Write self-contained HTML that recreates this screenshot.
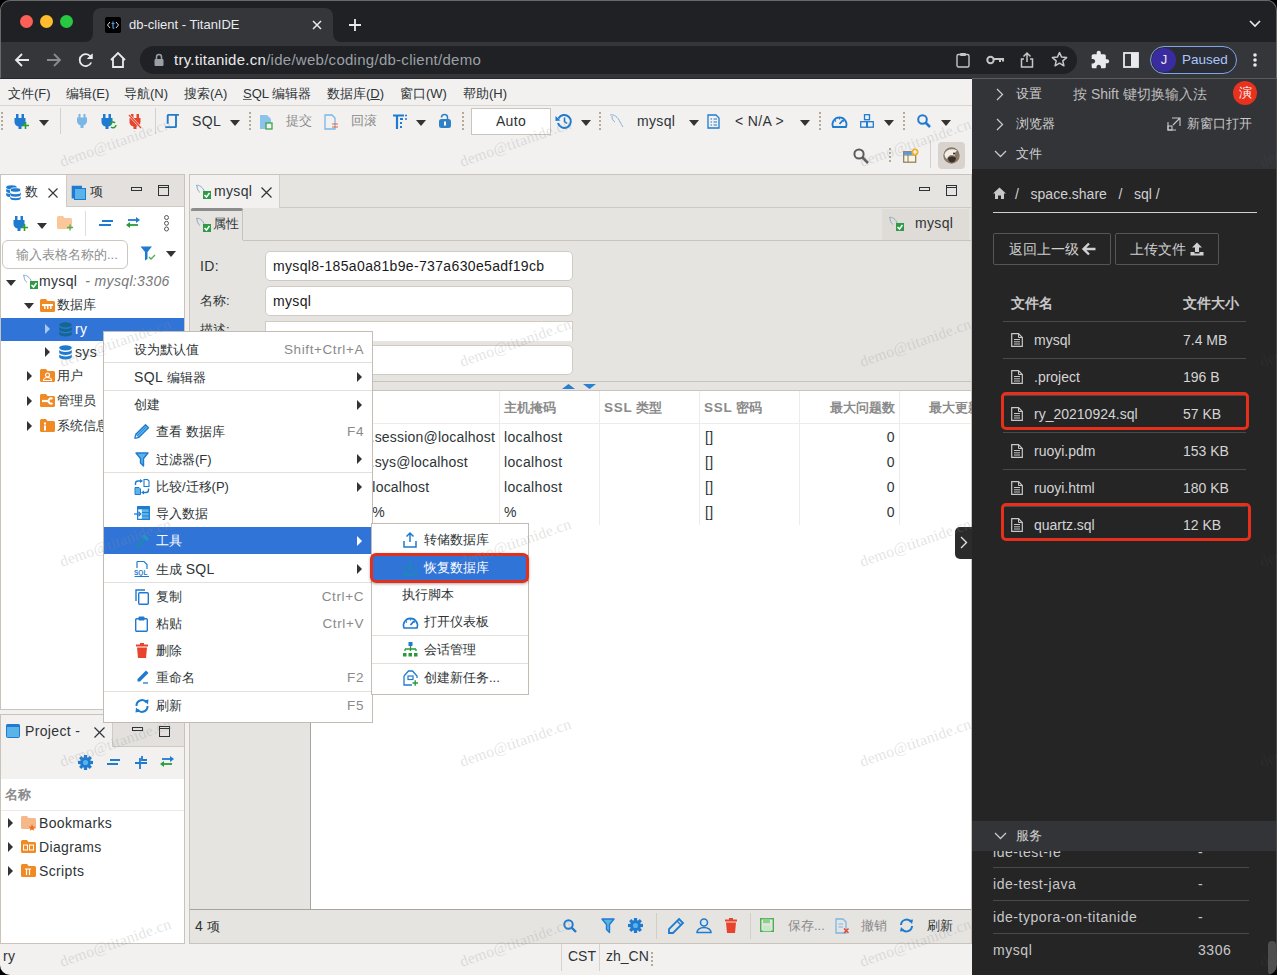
<!DOCTYPE html>
<html><head><meta charset="utf-8">
<style>
*{box-sizing:border-box;margin:0;padding:0}
html,body{width:1277px;height:975px;overflow:hidden;background:#f2f1f0;font-family:"Liberation Sans",sans-serif;}
.a{position:absolute}
.t{position:absolute;white-space:nowrap;line-height:16px}
svg{position:absolute;overflow:visible}
.l{font-size:14px;letter-spacing:0.35px}
.c{font-size:13px}
.g{color:#2e3436}
</style></head><body>

<!-- ============ BROWSER CHROME ============ -->
<div class="a" style="left:0;top:0;width:1277px;height:42px;background:#202124"></div>
<!-- traffic lights -->
<div class="a" style="left:20px;top:15px;width:13px;height:13px;border-radius:50%;background:#fe5f57"></div>
<div class="a" style="left:40px;top:15px;width:13px;height:13px;border-radius:50%;background:#febc2e"></div>
<div class="a" style="left:60px;top:15px;width:13px;height:13px;border-radius:50%;background:#28c840"></div>
<!-- active tab -->
<div class="a" style="left:93px;top:8px;width:240px;height:36px;background:#35363a;border-radius:8px 8px 0 0"></div>
<div class="a" style="left:85px;top:34px;width:8px;height:8px;background:#35363a"></div>
<div class="a" style="left:85px;top:34px;width:8px;height:8px;background:#202124;border-radius:0 0 8px 0"></div>
<div class="a" style="left:333px;top:34px;width:8px;height:8px;background:#35363a"></div>
<div class="a" style="left:333px;top:34px;width:8px;height:8px;background:#202124;border-radius:0 0 0 8px"></div>
<!-- toolbar -->
<div class="a" style="left:0;top:42px;width:1277px;height:37px;background:#35363a"></div>


<!-- favicon -->
<div class="a" style="left:105px;top:17px;width:16px;height:16px;background:#000;border-radius:2px"></div>
<svg style="left:105px;top:17px" width="16" height="16"><path d="M5 5L2.5 8L5 11M11 5L13.5 8L11 11" stroke="#d8d8d8" stroke-width="1" fill="none"/><path d="M8 4.5V10.5Q8 11.5 9.3 11.2M6.5 6.5H9.5" stroke="#4a9fe0" stroke-width="1.2" fill="none"/></svg>
<div class="t" style="left:129px;top:16px;font-size:13px;line-height:18px;color:#e8eaed">db-client - TitanIDE</div>
<!-- tab close -->
<svg style="left:311px;top:19px" width="12" height="12"><path d="M2 2L10 10M10 2L2 10" stroke="#e8eaed" stroke-width="1.5"/></svg>
<!-- new tab plus -->
<svg style="left:348px;top:18px" width="14" height="14"><path d="M7 1V13M1 7H13" stroke="#e8eaed" stroke-width="1.8"/></svg>
<!-- chevron top right -->
<svg style="left:1249px;top:20px" width="12" height="8"><path d="M1 1L6 6L11 1" stroke="#e8eaed" stroke-width="1.6" fill="none"/></svg>
<!-- nav icons -->
<svg style="left:14px;top:52px" width="16" height="16"><path d="M15 8H2M8 2L2 8L8 14" stroke="#e8eaed" stroke-width="1.8" fill="none"/></svg>
<svg style="left:46px;top:52px" width="16" height="16"><path d="M1 8H14M8 2L14 8L8 14" stroke="#8b8c8f" stroke-width="1.8" fill="none"/></svg>
<svg style="left:78px;top:52px" width="16" height="16"><path d="M13.5 6.5A6 6 0 1 0 13.2 10.5" stroke="#e8eaed" stroke-width="1.8" fill="none"/><path d="M14.5 1.5V7H9" fill="#e8eaed"/><path d="M14.5 1.5L14.5 7L9 7Z" fill="#e8eaed"/></svg>
<svg style="left:109px;top:51px" width="18" height="18"><path d="M2 9L9 2L16 9M4 7.5V16H14V7.5" stroke="#e8eaed" stroke-width="1.8" fill="none" stroke-linejoin="miter"/></svg>
<!-- omnibox -->
<div class="a" style="left:140px;top:46px;width:937px;height:28px;border-radius:14px;background:#202124"></div>
<svg style="left:154px;top:53px" width="10" height="13"><path d="M2.5 6V4A2.5 2.5 0 0 1 7.5 4V6" stroke="#9aa0a6" stroke-width="1.5" fill="none"/><rect x="0.5" y="6" width="9" height="7" rx="1" fill="#9aa0a6"/></svg>
<div class="t" style="left:174px;top:51px;font-size:15px;letter-spacing:0.27px;line-height:18px;color:#e8eaed">try.titanide.cn<span style="color:#9aa0a6">/ide/web/coding/db-client/demo</span></div>
<!-- omnibox right icons -->
<svg style="left:956px;top:52px" width="14" height="16"><rect x="1" y="2.5" width="12" height="12.5" rx="1.5" stroke="#c4c7c5" stroke-width="1.4" fill="none"/><rect x="4" y="1" width="6" height="3" rx="1" fill="#c4c7c5"/></svg>
<svg style="left:986px;top:55px" width="18" height="10"><circle cx="4.5" cy="5" r="3.2" stroke="#c4c7c5" stroke-width="2" fill="none"/><path d="M7.5 4H17V6.5M14 4V7" stroke="#c4c7c5" stroke-width="2" fill="none"/></svg>
<svg style="left:1020px;top:51px" width="14" height="17"><path d="M7 11V2M3.5 5.5L7 2L10.5 5.5M4 8H1.5V16H12.5V8H10" stroke="#c4c7c5" stroke-width="1.5" fill="none"/></svg>
<svg style="left:1051px;top:51px" width="17" height="17"><path d="M8.5 1.5L10.6 6.1L15.6 6.6L11.8 9.9L12.9 14.8L8.5 12.2L4.1 14.8L5.2 9.9L1.4 6.6L6.4 6.1Z" stroke="#c4c7c5" stroke-width="1.5" fill="none" stroke-linejoin="round"/></svg>
<!-- extension puzzle -->
<svg style="left:1090px;top:50px" width="20" height="20" viewBox="0 0 24 24"><path d="M20.5 11H19V7c0-1.1-.9-2-2-2h-4V3.5C13 2.12 11.88 1 10.5 1S8 2.12 8 3.5V5H4c-1.1 0-1.99.9-1.99 2v3.8H3.5c1.49 0 2.7 1.21 2.7 2.7s-1.21 2.7-2.7 2.7H2V20c0 1.1.9 2 2 2h3.8v-1.5c0-1.49 1.210-2.7 2.7-2.7 1.49 0 2.7 1.21 2.7 2.7V22H17c1.1 0 2-.9 2-2v-4h1.5c1.38 0 2.5-1.120 2.5-2.5S21.88 11 20.5 11z" fill="#e8eaed"/></svg>
<!-- sidebar -->
<svg style="left:1123px;top:52px" width="16" height="16"><rect x="1" y="1" width="14" height="14" stroke="#e8eaed" stroke-width="1.8" fill="none"/><rect x="8" y="1" width="7" height="14" fill="#e8eaed"/></svg>
<!-- paused pill -->
<div class="a" style="left:1150px;top:46px;width:87px;height:28px;border-radius:14px;border:1.5px solid #7ea6e6;background:#2b2d35"></div>
<div class="a" style="left:1152px;top:48px;width:24px;height:24px;border-radius:50%;background:#3b2ba0"></div>
<div class="t" style="left:1152px;top:52px;width:24px;text-align:center;font-size:13px;color:#e8eaed">J</div>
<div class="t" style="left:1182px;top:51px;font-size:13.5px;line-height:18px;color:#a8c7fa">Paused</div>
<!-- menu dots -->
<svg style="left:1252px;top:52px" width="6" height="16"><circle cx="3" cy="3" r="1.8" fill="#e8eaed"/><circle cx="3" cy="8" r="1.8" fill="#e8eaed"/><circle cx="3" cy="13" r="1.8" fill="#e8eaed"/></svg>

<!-- ============ IDE ============ -->
<div class="a" style="left:0;top:79px;width:972px;height:896px;background:#f2f1f0"></div>


<!-- menu bar -->
<div class="t" style="left:8px;top:86px;font-size:13px;color:#2e3436">文件(F)</div>
<div class="t" style="left:66px;top:86px;font-size:13px;color:#2e3436">编辑(E)</div>
<div class="t" style="left:124px;top:86px;font-size:13px;color:#2e3436">导航(N)</div>
<div class="t" style="left:184px;top:86px;font-size:13px;color:#2e3436">搜索(A)</div>
<div class="t" style="left:243px;top:86px;font-size:13px;color:#2e3436"><u style="text-decoration-color:#666">S</u>QL 编辑器</div>
<div class="t" style="left:327px;top:86px;font-size:13px;color:#2e3436">数据库(<u>D</u>)</div>
<div class="t" style="left:400px;top:86px;font-size:13px;color:#2e3436">窗口(W)</div>
<div class="t" style="left:463px;top:86px;font-size:13px;color:#2e3436">帮助(H)</div>
<div class="a" style="left:0;top:105px;width:972px;height:1px;background:#d9d5d0"></div>
<!-- toolbar 1 -->
<div class="a" style="left:1px;top:112px;width:2px;height:19px;background:repeating-linear-gradient(#b5a998 0 2px,transparent 2px 4px)"></div>
<svg style="left:14px;top:113px" width="16" height="17"><path d="M2 1H4.5V5H7.5V1H10V5H11.5V9A5 5 0 0 1 7.5 13.5V16H4.5V13.5A5 5 0 0 1 0.5 9V5H2Z" fill="#1e7bd0"/><path d="M8 12.5H15M11.5 9V16" stroke="#2aa02a" stroke-width="1.6"/></svg>
<svg style="left:39px;top:120px" width="10" height="6"><path d="M0 0H10L5.0 6Z" fill="#333"/></svg>
<div class="a" style="left:60px;top:108px;width:1px;height:26px;background:#d5d0ca"></div>
<svg style="left:77px;top:114px" width="10" height="14"><path d="M1.5 0H3.5V3.5H6.5V0H8.5V3.5H10V7A5 5 0 0 1 6.5 11.5V14H3.5V11.5A5 5 0 0 1 0 7V3.5H1.5Z" fill="#7ab6e6"/></svg>
<svg style="left:101px;top:113px" width="16" height="17"><path d="M2 1H4.5V5H7.5V1H10V5H11.5V9A5 5 0 0 1 7.5 13.5V16H4.5V13.5A5 5 0 0 1 0.5 9V5H2Z" fill="#1e7bd0"/><path d="M9 11A3 3 0 0 1 14 10M15 12A3 3 0 0 1 10 14" stroke="#2aa02a" stroke-width="1.5" fill="none"/></svg>
<svg style="left:128px;top:113px" width="14" height="16"><path d="M3 1H5.5V5H8.5V1H11V5H12.5V9A5 5 0 0 1 8.5 13.5V16H5.5V13.5A5 5 0 0 1 1.5 9V5H3Z" fill="#e8432c"/><path d="M1 2L13 15" stroke="#f2f1f0" stroke-width="2.5"/><path d="M1 2L13 15" stroke="#e8432c" stroke-width="1.2"/></svg>
<div class="a" style="left:155px;top:108px;width:1px;height:26px;background:#d5d0ca"></div>
<svg style="left:165px;top:114px" width="15" height="15"><path d="M2.7 9.7V1.5Q2.7 0.9 3.3 0.9H13.9M11 0.9V12.5Q11 13.1 10.4 13.1H0.3" stroke="#1e7bd0" stroke-width="1.9" fill="none"/></svg>
<div class="t l g" style="left:192px;top:113px">SQL</div>
<svg style="left:230px;top:120px" width="10" height="6"><path d="M0 0H10L5.0 6Z" fill="#333"/></svg><div class="a" style="left:249px;top:112px;width:2px;height:19px;background:repeating-linear-gradient(#b5a998 0 2px,transparent 2px 4px)"></div>
<svg style="left:259px;top:114px" width="14" height="16"><path d="M1 1H8L12 5V15H1Z" fill="#8cc3ec"/><rect x="7" y="9" width="6" height="6" fill="#f2f1f0" stroke="#3aa845" stroke-width="1.3"/></svg>
<div class="t" style="left:286px;top:113px;font-size:13px;color:#8a8a8a">提交</div>
<svg style="left:324px;top:114px" width="15" height="16"><path d="M1 1H8L11 4V15H1Z" fill="none" stroke="#7ab6e6" stroke-width="1.3"/><path d="M8 10H14M8 13H14" stroke="#e8603c" stroke-width="1.2"/></svg>
<div class="t" style="left:351px;top:113px;font-size:13px;color:#8a8a8a">回滚</div>
<svg style="left:393px;top:114px" width="15" height="16"><path d="M0 1.5H11M4 1.5V15M7 5H10M7 9H9M7 13H9" stroke="#1e7bd0" stroke-width="2.2" fill="none"/><path d="M12 1.5H14M12 5H14" stroke="#1e7bd0" stroke-width="1.6"/></svg>
<svg style="left:416px;top:120px" width="10" height="6"><path d="M0 0H10L5.0 6Z" fill="#333"/></svg>
<svg style="left:438px;top:113px" width="14" height="16"><path d="M3.5 4.5A3 3 0 0 1 9.5 4.5V6.5" stroke="#2f80c4" stroke-width="1.5" fill="none"/><rect x="1" y="6" width="12" height="9" rx="2.5" fill="#2f80c4"/><rect x="6" y="8.5" width="2" height="4" fill="#fff"/></svg>
<div class="a" style="left:462px;top:112px;width:2px;height:19px;background:repeating-linear-gradient(#b5a998 0 2px,transparent 2px 4px)"></div>
<div class="a" style="left:471px;top:108px;width:80px;height:27px;background:#fff;border:1px solid #c9c4bd"></div>
<div class="t l g" style="left:471px;top:113px;width:80px;text-align:center">Auto</div>
<svg style="left:555px;top:113px" width="17" height="16"><path d="M3.5 5.5A6.5 6.5 0 1 1 3 10" stroke="#1e7bd0" stroke-width="2" fill="none"/><path d="M0.5 3L5.5 7.5L0.5 8Z" fill="#1e7bd0"/><path d="M9.5 4.5V8.5L12 10.5" stroke="#1e7bd0" stroke-width="1.6" fill="none"/></svg>
<svg style="left:581px;top:120px" width="10" height="6"><path d="M0 0H10L5.0 6Z" fill="#333"/></svg><div class="a" style="left:599px;top:112px;width:2px;height:19px;background:repeating-linear-gradient(#b5a998 0 2px,transparent 2px 4px)"></div>
<svg style="left:609px;top:113px" width="15" height="16"><path d="M1 2C5 1 9 4 11 9C12 11 13 12 14 14M3 3C3 6 4 8 6 9" stroke="#8ab0d0" stroke-width="1" fill="none"/></svg>
<div class="t l g" style="left:637px;top:113px">mysql</div>
<svg style="left:689px;top:120px" width="10" height="6"><path d="M0 0H10L5.0 6Z" fill="#333"/></svg>
<svg style="left:707px;top:114px" width="13" height="15"><path d="M1 1H9L12 4V14H1Z" fill="none" stroke="#1e7bd0" stroke-width="1.3"/><path d="M3.5 5H5M3.5 8H5M3.5 11H5M6.5 5H10M6.5 8H10M6.5 11H10" stroke="#1e7bd0" stroke-width="1.2"/></svg>
<div class="t l g" style="left:735px;top:113px">&lt; N/A &gt;</div>
<svg style="left:800px;top:120px" width="10" height="6"><path d="M0 0H10L5.0 6Z" fill="#333"/></svg><div class="a" style="left:819px;top:112px;width:2px;height:19px;background:repeating-linear-gradient(#b5a998 0 2px,transparent 2px 4px)"></div>
<svg style="left:831px;top:114px" width="17" height="14"><path d="M2 13A7 7 0 1 1 15 13Z" fill="none" stroke="#1e7bd0" stroke-width="1.8"/><path d="M8.5 10L12 6" stroke="#1e7bd0" stroke-width="1.8"/><path d="M4 6.5L5 7.5M8.5 4V5.5M13 6.5L12 7.5" stroke="#1e7bd0" stroke-width="1.2"/></svg>
<svg style="left:860px;top:114px" width="14" height="14"><rect x="4.5" y="0.7" width="5" height="5" fill="none" stroke="#1e7bd0" stroke-width="1.3"/><rect x="0.7" y="7.7" width="6" height="5.5" fill="none" stroke="#1e7bd0" stroke-width="1.3"/><rect x="7.3" y="7.7" width="6" height="5.5" fill="none" stroke="#1e7bd0" stroke-width="1.3"/></svg>
<svg style="left:884px;top:120px" width="10" height="6"><path d="M0 0H10L5.0 6Z" fill="#333"/></svg><div class="a" style="left:903px;top:112px;width:2px;height:19px;background:repeating-linear-gradient(#b5a998 0 2px,transparent 2px 4px)"></div>
<svg style="left:917px;top:114px" width="14" height="14"><circle cx="5.5" cy="5.5" r="4.3" stroke="#1e7bd0" stroke-width="2" fill="none"/><path d="M8.5 8.5L13 13" stroke="#1e7bd0" stroke-width="2.5"/></svg>
<svg style="left:941px;top:120px" width="10" height="6"><path d="M0 0H10L5.0 6Z" fill="#333"/></svg>
<!-- toolbar 2 -->
<svg style="left:853px;top:148px" width="16" height="16"><circle cx="6" cy="6" r="4.6" stroke="#5c5c5c" stroke-width="2" fill="none"/><path d="M9.5 9.5L15 15" stroke="#5c5c5c" stroke-width="2.6"/></svg>
<div class="a" style="left:889px;top:148px;width:2px;height:16px;background:repeating-linear-gradient(#b5a998 0 2px,transparent 2px 4px)"></div>
<svg style="left:903px;top:148px" width="16" height="15"><rect x="0.7" y="3.7" width="12" height="10.5" fill="#fbf5e0" stroke="#8a7a5a" stroke-width="1.2"/><path d="M0.7 7H12.7M5 3.7V14" stroke="#8a7a5a" stroke-width="1"/><rect x="0.7" y="3.7" width="12" height="3" fill="#5b9bd5"/><circle cx="12" cy="4" r="3.5" fill="#f0b030"/><path d="M12 2V6M10 4H14" stroke="#fff" stroke-width="1.2"/></svg>
<div class="a" style="left:930px;top:140px;width:1px;height:28px;background:#d5d0ca"></div>
<div class="a" style="left:938px;top:142px;width:27px;height:27px;border-radius:4px;background:#d8d3ce"></div>
<svg style="left:942px;top:146px" width="19" height="19"><circle cx="9.5" cy="9.5" r="9" fill="#8a7a6c" stroke="#ddd6ce" stroke-width="1.5"/><path d="M2.5 8C4 3.5 10 2 15 4.5C13 6 12 8 13 10C10 8 6 9 5 13C3.5 12 2.5 10 2.5 8Z" fill="#f2eee8"/><path d="M6 12C8 10 12 10 14 12C14 15 11 17 9 16.5C7 16 6 14 6 12Z" fill="#3a2e26"/><circle cx="12" cy="7.5" r="1" fill="#2a201a"/></svg>



<!-- ====== EDITOR ====== -->
<div class="a" style="left:189px;top:174px;width:783px;height:770px;background:#e6e4e1;border:1px solid #c9c3bc"></div>
<div class="a" style="left:190px;top:175px;width:90px;height:33px;background:#f2f1f0;border-right:1px solid #d3cec8"></div>
<div class="a" style="left:280px;top:207px;width:691px;height:1px;background:#cfc9c2"></div>
<svg style="left:195px;top:184px" width="16" height="15"><path d="M1 1.5C4 0.5 8 3 9.5 8M2 2C2 5 3 7 5 8.5" stroke="#8aaac8" stroke-width="1" fill="none"/><rect x="8" y="7" width="8" height="8" fill="#2f9a45"/><path d="M9.5 11L11.5 13L14.5 9" stroke="#fff" stroke-width="1.5" fill="none"/></svg>
<div class="t l g" style="left:214px;top:183px">mysql</div>
<svg style="left:261px;top:187px" width="11" height="11"><path d="M0.5 0.5L10.5 10.5M10.5 0.5L0.5 10.5" stroke="#2e3436" stroke-width="1.2"/></svg>
<div class="a" style="left:919px;top:187px;width:11px;height:4px;border:1px solid #2e3436"></div>
<div class="a" style="left:946px;top:185px;width:11px;height:11px;border:1px solid #2e3436;border-top-width:3px;border-top-style:double"></div>
<!-- subtabs -->
<div class="a" style="left:191px;top:208px;width:52px;height:3px;background:#8c8c8c;border-radius:2px 2px 0 0"></div>
<div class="a" style="left:242px;top:210px;width:1px;height:30px;background:#c9c3bc"></div>
<div class="a" style="left:243px;top:240px;width:728px;height:1px;background:#c9c3bc"></div>
<svg style="left:195px;top:217px" width="16" height="15"><path d="M1 1.5C4 0.5 8 3 9.5 8M2 2C2 5 3 7 5 8.5" stroke="#8aaac8" stroke-width="1" fill="none"/><rect x="8" y="7" width="8" height="8" fill="#2f9a45"/><path d="M9.5 11L11.5 13L14.5 9" stroke="#fff" stroke-width="1.5" fill="none"/></svg>
<div class="t c g" style="left:213px;top:216px">属性</div>
<div class="a" style="left:882px;top:209px;width:87px;height:31px;background:#dfdbd7"></div>
<svg style="left:888px;top:216px" width="16" height="15"><path d="M1 1.5C4 0.5 8 3 9.5 8M2 2C2 5 3 7 5 8.5" stroke="#8aaac8" stroke-width="1" fill="none"/><rect x="8" y="7" width="8" height="8" fill="#2f9a45"/><path d="M9.5 11L11.5 13L14.5 9" stroke="#fff" stroke-width="1.5" fill="none"/></svg>
<div class="t l g" style="left:915px;top:215px">mysql</div>
<!-- form -->
<div class="t l g" style="left:200px;top:258px">ID:</div>
<div class="a" style="left:265px;top:251px;width:308px;height:30px;background:#fff;border:1px solid #d0cac3;border-radius:5px"></div>
<div class="t l g" style="left:273px;top:258px;color:#1a1a1a">mysql8-185a0a81b9e-737a630e5adf19cb</div>
<div class="t c g" style="left:200px;top:293px">名称:</div>
<div class="a" style="left:265px;top:286px;width:308px;height:30px;background:#fff;border:1px solid #d0cac3;border-radius:5px"></div>
<div class="t l g" style="left:273px;top:293px;color:#1a1a1a">mysql</div>
<div class="t c g" style="left:200px;top:322px;height:12px;overflow:hidden">描述:</div>
<div class="a" style="left:265px;top:321px;width:308px;height:20px;background:#fff;border:1px solid #d0cac3;border-bottom:none;border-radius:0"></div>
<div class="a" style="left:265px;top:345px;width:308px;height:30px;background:#fff;border:1px solid #d0cac3;border-radius:5px"></div>
<!-- sash -->
<div class="a" style="left:190px;top:381px;width:781px;height:1px;background:#c9c3bc"></div>
<svg style="left:562px;top:384px" width="36" height="6"><path d="M0 5L6.5 0L13 5Z" fill="#2a7fd0"/><path d="M21 0H34L27.5 5Z" fill="#2a7fd0"/></svg>
<!-- table -->
<div class="a" style="left:190px;top:390px;width:121px;height:519px;background:#e6e4e1;border-right:1px solid #a8a39e"></div>
<div class="a" style="left:311px;top:390px;width:660px;height:519px;background:#fff;border-top:1px solid #c9c3bc"></div>
<div class="a" style="left:311px;top:423px;width:660px;height:1px;background:#eeebe8"></div>
<div class="a" style="left:499px;top:391px;width:1px;height:134px;background:#eeebe8"></div>
<div class="a" style="left:599px;top:391px;width:1px;height:134px;background:#eeebe8"></div>
<div class="a" style="left:699px;top:391px;width:1px;height:134px;background:#eeebe8"></div>
<div class="a" style="left:799px;top:391px;width:1px;height:134px;background:#eeebe8"></div>
<div class="a" style="left:899px;top:391px;width:1px;height:134px;background:#eeebe8"></div>
<div class="t c" style="left:504px;top:400px;color:#8a8a8a;font-weight:bold">主机掩码</div>
<div class="t c" style="left:604px;top:400px;color:#8a8a8a;font-weight:bold"><span class="l" style="font-size:13.5px;letter-spacing:0.8px">SSL</span> 类型</div>
<div class="t c" style="left:704px;top:400px;color:#8a8a8a;font-weight:bold"><span class="l" style="font-size:13.5px;letter-spacing:0.8px">SSL</span> 密码</div>
<div class="t c" style="left:795px;top:400px;width:100px;text-align:right;color:#8a8a8a;font-weight:bold">最大问题数</div>
<div class="t c" style="left:929px;top:400px;color:#8a8a8a;font-weight:bold">最大更新数</div>
<div class="t l g" style="left:333px;letter-spacing:0.2px;top:429px">mysql.session@localhost</div><div class="t l g" style="left:504px;top:429px">localhost</div><div class="t l g" style="left:705px;top:429px">[]</div><div class="t l g" style="left:795px;top:429px;width:100px;text-align:right">0</div><div class="t l g" style="left:333px;letter-spacing:0.2px;top:454px">mysql.sys@localhost</div><div class="t l g" style="left:504px;top:454px">localhost</div><div class="t l g" style="left:705px;top:454px">[]</div><div class="t l g" style="left:795px;top:454px;width:100px;text-align:right">0</div><div class="t l g" style="left:333px;letter-spacing:0.2px;top:479px">root@localhost</div><div class="t l g" style="left:504px;top:479px">localhost</div><div class="t l g" style="left:705px;top:479px">[]</div><div class="t l g" style="left:795px;top:479px;width:100px;text-align:right">0</div><div class="t l g" style="left:333px;letter-spacing:0.2px;top:504px">root@%</div><div class="t l g" style="left:504px;top:504px">%</div><div class="t l g" style="left:705px;top:504px">[]</div><div class="t l g" style="left:795px;top:504px;width:100px;text-align:right">0</div>
<!-- bottom toolbar -->
<div class="a" style="left:190px;top:909px;width:781px;height:1px;background:#a8a39e"></div>
<div class="t c g" style="left:195px;top:918px"><span class="l">4</span> 项</div>
<svg style="left:563px;top:919px" width="14" height="14"><circle cx="5.5" cy="5.5" r="4.2" stroke="#1e7bd0" stroke-width="2" fill="none"/><path d="M8.5 8.5L13 13" stroke="#1e7bd0" stroke-width="2.4"/></svg>
<svg style="left:601px;top:918px" width="14" height="15"><path d="M1 1H13L8.5 6.5V14.5L5.5 11.5V6.5Z" fill="#5ab4e8" stroke="#1e7bd0" stroke-width="1.4" stroke-linejoin="round"/></svg>
<svg style="left:628px;top:918px" width="15" height="15"><rect x="5.90" y="0" width="3.2" height="7.50" fill="#1e7bd0" transform="rotate(0 7.5 7.5)"/><rect x="5.90" y="0" width="3.2" height="7.50" fill="#1e7bd0" transform="rotate(45 7.5 7.5)"/><rect x="5.90" y="0" width="3.2" height="7.50" fill="#1e7bd0" transform="rotate(90 7.5 7.5)"/><rect x="5.90" y="0" width="3.2" height="7.50" fill="#1e7bd0" transform="rotate(135 7.5 7.5)"/><rect x="5.90" y="0" width="3.2" height="7.50" fill="#1e7bd0" transform="rotate(180 7.5 7.5)"/><rect x="5.90" y="0" width="3.2" height="7.50" fill="#1e7bd0" transform="rotate(225 7.5 7.5)"/><rect x="5.90" y="0" width="3.2" height="7.50" fill="#1e7bd0" transform="rotate(270 7.5 7.5)"/><rect x="5.90" y="0" width="3.2" height="7.50" fill="#1e7bd0" transform="rotate(315 7.5 7.5)"/><circle cx="7.5" cy="7.5" r="5.40" fill="#1e7bd0"/><circle cx="7.5" cy="7.5" r="2.55" fill="#5ab4e8"/></svg>
<div class="a" style="left:656px;top:913px;width:1px;height:26px;background:#d3cec8"></div>
<svg style="left:668px;top:918px" width="16" height="16"><path d="M11 1L15 5L5 15H1V11Z" fill="none" stroke="#1e7bd0" stroke-width="1.8"/><path d="M9 3L13 7" stroke="#1e7bd0" stroke-width="1.5"/></svg>
<svg style="left:696px;top:918px" width="16" height="15"><circle cx="8" cy="4.5" r="3.5" fill="none" stroke="#1e7bd0" stroke-width="1.6"/><path d="M1 14.5A7 5 0 0 1 15 14.5Z" fill="none" stroke="#1e7bd0" stroke-width="1.6"/></svg>
<svg style="left:725px;top:918px" width="12" height="15"><rect x="0" y="1.5" width="12" height="2" fill="#e8432c"/><rect x="4" y="0" width="4" height="2" fill="#e8432c"/><path d="M1 4.5H11L10 15H2Z" fill="#e8432c"/></svg>
<div class="a" style="left:750px;top:913px;width:1px;height:26px;background:#d3cec8"></div>
<svg style="left:760px;top:918px" width="14" height="14"><rect x="0.7" y="0.7" width="12.6" height="12.6" fill="none" stroke="#4caf50" stroke-width="1.4"/><rect x="3" y="0.7" width="7" height="4.5" fill="#8fd08f"/><rect x="3" y="7.5" width="8" height="5.8" fill="#c8e8c8"/></svg>
<div class="t c" style="left:788px;top:918px;color:#8a8a8a">保存...</div>
<svg style="left:835px;top:918px" width="15" height="16"><path d="M1 1H8L11 4V15H1Z" fill="none" stroke="#7ab6e6" stroke-width="1.3"/><path d="M3.5 6H8M3.5 9H8" stroke="#7ab6e6" stroke-width="1"/><path d="M9 10.5L13.5 15M13.5 10.5L9 15" stroke="#e8432c" stroke-width="1.4"/></svg>
<div class="t c" style="left:861px;top:918px;color:#8a8a8a">撤销</div>
<svg style="left:898px;top:917px" width="17" height="17"><path d="M3 8A5.5 5.5 0 0 1 13 5" stroke="#1e7bd0" stroke-width="2" fill="none"/><path d="M14 9A5.5 5.5 0 0 1 4 12" stroke="#1e7bd0" stroke-width="2" fill="none"/><path d="M10.5 3L15 2.5L14 7Z" fill="#1e7bd0"/><path d="M6.5 14L2 14.5L3 10Z" fill="#1e7bd0"/></svg>
<div class="t c g" style="left:927px;top:918px">刷新</div>
<!-- collapse handle -->
<div class="a" style="left:955px;top:527px;width:18px;height:32px;background:#2b2b2c;border-radius:5px 0 0 5px"></div>
<svg style="left:960px;top:536px" width="8" height="13"><path d="M1 1L6.5 6.5L1 12" stroke="#e0e0e0" stroke-width="1.4" fill="none"/></svg>

<!-- ====== LEFT NAV PANEL ====== -->
<div class="a" style="left:0;top:174px;width:185px;height:536px;background:#fff;border:1px solid #c9c3bc"></div>
<div class="a" style="left:66px;top:175px;width:118px;height:32px;background:#e3e0dd;border-bottom:1px solid #cfc9c2"></div>
<div class="a" style="left:66px;top:175px;width:1px;height:32px;background:#d0cac4"></div>
<svg style="left:6px;top:185px" width="15" height="15"><ellipse cx="5.5" cy="2.2" rx="5.3" ry="2" fill="#1e7bd0"/><path d="M0.2 4V6.5C1 7.5 3 8 4 8V4.8C2.5 4.8 1 4.5 0.2 4Z M0.2 8V10.5C1 11.5 3 12 4 12V8.8C2.5 8.8 1 8.5 0.2 8Z" fill="#1e7bd0"/><ellipse cx="9.5" cy="5" rx="5.3" ry="2.2" fill="#1e7bd0" stroke="#fff" stroke-width="0.8"/><path d="M4.2 7V9.5A5.3 2.2 0 0 0 14.8 9.5V7A5.3 2.2 0 0 1 4.2 7Z" fill="#1e7bd0"/><path d="M4.2 11V13A5.3 2.2 0 0 0 14.8 13V11A5.3 2.2 0 0 1 4.2 11Z" fill="#1e7bd0"/></svg>
<div class="t c g" style="left:25px;top:184px">数</div>
<svg style="left:48px;top:188px" width="10" height="10"><path d="M0.5 0.5L9.5 9.5M9.5 0.5L0.5 9.5" stroke="#2e3436" stroke-width="1.1"/></svg>
<svg style="left:71px;top:185px" width="15" height="15"><path d="M0.7 0.7H11V3.5H3.5V13.5H0.7Z" fill="#1e7bd0"/><rect x="3.5" y="3.5" width="11" height="11" fill="#5ab4e8" stroke="#1e7bd0" stroke-width="1"/></svg>
<div class="t c g" style="left:90px;top:184px">项</div>
<div class="a" style="left:131px;top:187px;width:11px;height:4px;border:1px solid #2e3436"></div>
<div class="a" style="left:158px;top:185px;width:11px;height:11px;border:1px solid #2e3436;border-top-width:3px;border-top-style:double"></div>
<!-- toolbar -->
<svg style="left:13px;top:216px" width="16" height="17"><path d="M2 0H4.5V4H7.5V0H10V4H11.5V8A5 5 0 0 1 7.5 12.5V15H4.5V12.5A5 5 0 0 1 0.5 8V4H2Z" fill="#1e7bd0"/><path d="M8 11.5H15M11.5 8V15" stroke="#2aa02a" stroke-width="1.6"/></svg>
<svg style="left:37px;top:223px" width="10" height="6"><path d="M0 0H10L5.0 6Z" fill="#333"/></svg>
<svg style="left:57px;top:216px" width="17" height="15"><path d="M0 1.5A1.5 1.5 0 0 1 1.5 0H6L7.5 2H13.5A1.5 1.5 0 0 1 15 3.5V11.5A1.5 1.5 0 0 1 13.5 13H1.5A1.5 1.5 0 0 1 0 11.5Z" fill="#fbc79a"/><path d="M13 8.5V14.5M10 11.5H16" stroke="#4caf50" stroke-width="1.3"/></svg>
<div class="a" style="left:85px;top:211px;width:1px;height:25px;background:#e0dcd7"></div>
<svg style="left:99px;top:219px" width="15" height="8"><path d="M3 2H14M0 6H12" stroke="#1e7bd0" stroke-width="1.8"/></svg>
<svg style="left:125px;top:217px" width="16" height="12"><path d="M3 3H13" stroke="#1e7bd0" stroke-width="1.8"/><path d="M11 0L15 3L11 6Z" fill="#1e7bd0"/><path d="M3 8H13" stroke="#2a9a3a" stroke-width="1.8"/><path d="M5 5L1 8L5 11Z" fill="#2a9a3a"/></svg>
<svg style="left:163px;top:215px" width="7" height="17"><circle cx="3.5" cy="2.5" r="2" fill="none" stroke="#555" stroke-width="1"/><circle cx="3.5" cy="8.3" r="2" fill="none" stroke="#555" stroke-width="1"/><circle cx="3.5" cy="14" r="2" fill="none" stroke="#555" stroke-width="1"/></svg>
<!-- filter input -->
<div class="a" style="left:2px;top:240px;width:126px;height:29px;background:#fff;border:1px solid #cdc7c0;border-radius:6px"></div>
<div class="t c" style="left:16px;top:247px;color:#8f8f8f">输入表格名称的...</div>
<svg style="left:140px;top:246px" width="16" height="15"><path d="M0.5 0.5H12L7.5 6V13L5 14.5V6Z" fill="#1e7bd0"/><path d="M9 11L11 13L15 9" stroke="#4caf50" stroke-width="1.3" fill="none"/></svg>
<svg style="left:166px;top:251px" width="10" height="6"><path d="M0 0H10L5.0 6Z" fill="#333"/></svg>
<!-- tree -->
<svg style="left:6px;top:280px" width="10" height="6"><path d="M0 0H10L5.0 6Z" fill="#333"/></svg><svg style="left:22px;top:274px" width="16" height="15"><path d="M1 1.5C4 0.5 8 3 9.5 8M2 2C2 5 3 7 5 8.5" stroke="#8aaac8" stroke-width="1" fill="none"/><rect x="8" y="7" width="8" height="8" fill="#2f9a45"/><path d="M9.5 11L11.5 13L14.5 9" stroke="#fff" stroke-width="1.5" fill="none"/></svg>
<div class="t l g" style="left:39px;top:273px">mysql<i style="color:#777;margin-left:8px">- mysql:3306</i></div>
<svg style="left:24px;top:303px" width="10" height="6"><path d="M0 0H10L5.0 6Z" fill="#333"/></svg><svg style="left:40px;top:299px" width="15" height="13"><path d="M0 1.5A1.5 1.5 0 0 1 1.5 0H6L7.5 2H13.5A1.5 1.5 0 0 1 15 3.5V11.5A1.5 1.5 0 0 1 13.5 13H1.5A1.5 1.5 0 0 1 0 11.5Z" fill="#f08a24"/><path d="M2 4.5H13V11H2Z" fill="#fff" opacity="0"/><rect x="2" y="5" width="11" height="2" fill="#fff"/><rect x="4" y="7" width="1.5" height="3" fill="#fff"/><rect x="7" y="7" width="1.5" height="3" fill="#fff"/><rect x="10" y="7" width="1.5" height="3" fill="#fff"/></svg>
<div class="t c g" style="left:57px;top:297px">数据库</div>
<div class="a" style="left:1px;top:318px;width:183px;height:23px;background:#3174d8"></div>
<svg style="left:45px;top:324px" width="5" height="10"><path d="M0 0L5 5.0L0 10Z" fill="#a9c8f0"/></svg><svg style="left:59px;top:322px" width="13" height="15"><ellipse cx="6.5" cy="2.8" rx="6.3" ry="2.6" fill="#13688f"/><path d="M0.2 4.5A6.3 2.6 0 0 0 12.8 4.5V7.5A6.3 2.6 0 0 1 0.2 7.5Z" fill="#13688f"/><path d="M0.2 9A6.3 2.6 0 0 0 12.8 9V12A6.3 2.6 0 0 1 0.2 12Z" fill="#13688f"/></svg>
<div class="t l" style="left:75px;top:321px;color:#fff">ry</div>
<svg style="left:45px;top:347px" width="5" height="10"><path d="M0 0L5 5.0L0 10Z" fill="#333"/></svg><svg style="left:59px;top:345px" width="13" height="15"><ellipse cx="6.5" cy="2.8" rx="6.3" ry="2.6" fill="#1e7bd0"/><path d="M0.2 4.5A6.3 2.6 0 0 0 12.8 4.5V7.5A6.3 2.6 0 0 1 0.2 7.5Z" fill="#1e7bd0"/><path d="M0.2 9A6.3 2.6 0 0 0 12.8 9V12A6.3 2.6 0 0 1 0.2 12Z" fill="#1e7bd0"/></svg>
<div class="t l g" style="left:75px;top:344px">sys</div>
<svg style="left:27px;top:371px" width="5" height="10"><path d="M0 0L5 5.0L0 10Z" fill="#333"/></svg><svg style="left:40px;top:369px" width="15" height="13"><path d="M0 1.5A1.5 1.5 0 0 1 1.5 0H6L7.5 2H13.5A1.5 1.5 0 0 1 15 3.5V11.5A1.5 1.5 0 0 1 13.5 13H1.5A1.5 1.5 0 0 1 0 11.5Z" fill="#f08a24"/><circle cx="7.5" cy="6" r="2" fill="none" stroke="#fff" stroke-width="1.2"/><path d="M3.5 11.5A4 3 0 0 1 11.5 11.5Z" fill="none" stroke="#fff" stroke-width="1.2"/></svg>
<div class="t c g" style="left:57px;top:368px">用户</div>
<svg style="left:27px;top:396px" width="5" height="10"><path d="M0 0L5 5.0L0 10Z" fill="#333"/></svg><svg style="left:40px;top:394px" width="15" height="13"><path d="M0 1.5A1.5 1.5 0 0 1 1.5 0H6L7.5 2H13.5A1.5 1.5 0 0 1 15 3.5V11.5A1.5 1.5 0 0 1 13.5 13H1.5A1.5 1.5 0 0 1 0 11.5Z" fill="#f08a24"/><path d="M2 7H8.5" stroke="#fff" stroke-width="2.2"/><path d="M12.5 4.8A2.6 2.6 0 1 0 12.5 9.2" stroke="#fff" stroke-width="2" fill="none"/></svg>
<div class="t c g" style="left:57px;top:393px">管理员</div>
<svg style="left:27px;top:421px" width="5" height="10"><path d="M0 0L5 5.0L0 10Z" fill="#333"/></svg><svg style="left:40px;top:419px" width="15" height="13"><path d="M0 1.5A1.5 1.5 0 0 1 1.5 0H6L7.5 2H13.5A1.5 1.5 0 0 1 15 3.5V11.5A1.5 1.5 0 0 1 13.5 13H1.5A1.5 1.5 0 0 1 0 11.5Z" fill="#f08a24"/><rect x="4" y="3.5" width="2" height="2" fill="#fff"/><rect x="4" y="6.5" width="2" height="5" fill="#fff"/></svg>
<div class="t c g" style="left:57px;top:418px">系统信息</div>

<!-- ====== PROJECT PANEL ====== -->
<div class="a" style="left:0;top:714px;width:185px;height:230px;background:#fff;border:1px solid #c9c3bc"></div>
<div class="a" style="left:1px;top:715px;width:183px;height:64px;background:#f2f1f0"></div>
<div class="a" style="left:112px;top:715px;width:72px;height:32px;background:#e3e0dd;border-left:1px solid #d0cac4;border-bottom:1px solid #d0cac4"></div>
<svg style="left:6px;top:724px" width="14" height="14"><rect x="0.5" y="0.5" width="13" height="13" rx="1" fill="#5ab4e8" stroke="#1e7bd0" stroke-width="1"/><rect x="0.5" y="0.5" width="13" height="2.5" fill="#1e7bd0"/></svg>
<div class="t l g" style="left:25px;top:723px">Project -</div>
<svg style="left:94px;top:727px" width="11" height="11"><path d="M0.5 0.5L10.5 10.5M10.5 0.5L0.5 10.5" stroke="#2e3436" stroke-width="1.2"/></svg>
<div class="a" style="left:132px;top:727px;width:11px;height:4px;border:1px solid #2e3436"></div>
<div class="a" style="left:159px;top:726px;width:11px;height:11px;border:1px solid #2e3436;border-top-width:3px;border-top-style:double"></div>
<svg style="left:78px;top:755px" width="15" height="15"><rect x="5.90" y="0" width="3.2" height="7.50" fill="#1e7bd0" transform="rotate(0 7.5 7.5)"/><rect x="5.90" y="0" width="3.2" height="7.50" fill="#1e7bd0" transform="rotate(45 7.5 7.5)"/><rect x="5.90" y="0" width="3.2" height="7.50" fill="#1e7bd0" transform="rotate(90 7.5 7.5)"/><rect x="5.90" y="0" width="3.2" height="7.50" fill="#1e7bd0" transform="rotate(135 7.5 7.5)"/><rect x="5.90" y="0" width="3.2" height="7.50" fill="#1e7bd0" transform="rotate(180 7.5 7.5)"/><rect x="5.90" y="0" width="3.2" height="7.50" fill="#1e7bd0" transform="rotate(225 7.5 7.5)"/><rect x="5.90" y="0" width="3.2" height="7.50" fill="#1e7bd0" transform="rotate(270 7.5 7.5)"/><rect x="5.90" y="0" width="3.2" height="7.50" fill="#1e7bd0" transform="rotate(315 7.5 7.5)"/><circle cx="7.5" cy="7.5" r="5.40" fill="#1e7bd0"/><circle cx="7.5" cy="7.5" r="2.55" fill="#5ab4e8"/></svg>
<svg style="left:107px;top:758px" width="14" height="8"><path d="M3 2H13M0 6H11" stroke="#1e7bd0" stroke-width="1.8"/></svg>
<svg style="left:134px;top:755px" width="14" height="14"><path d="M1 8H13M6 3V14M8 1V5H13" stroke="#1e7bd0" stroke-width="1.8" fill="none"/></svg>
<svg style="left:159px;top:756px" width="16" height="12"><path d="M3 3H13" stroke="#1e7bd0" stroke-width="1.8"/><path d="M11 0L15 3L11 6Z" fill="#1e7bd0"/><path d="M3 8H13" stroke="#2a9a3a" stroke-width="1.8"/><path d="M5 5L1 8L5 11Z" fill="#2a9a3a"/></svg>
<div class="t c" style="left:5px;top:787px;color:#8a8a8a;font-weight:bold">名称</div>
<div class="a" style="left:1px;top:810px;width:183px;height:1px;background:#eeeae6"></div>
<svg style="left:8px;top:818px" width="5" height="10"><path d="M0 0L5 5.0L0 10Z" fill="#333"/></svg><svg style="left:21px;top:816px" width="15" height="13"><path d="M0 1.5A1.5 1.5 0 0 1 1.5 0H6L7.5 2H13.5A1.5 1.5 0 0 1 15 3.5V11.5A1.5 1.5 0 0 1 13.5 13H1.5A1.5 1.5 0 0 1 0 11.5Z" fill="#f6b88a"/><path d="M11 8L12 10.5L14.5 10.7L12.5 12.3L13.2 14.8L11 13.4L8.8 14.8L9.5 12.3L7.5 10.7L10 10.5Z" fill="#f07020"/></svg>
<div class="t l g" style="left:39px;top:815px">Bookmarks</div>
<svg style="left:8px;top:842px" width="5" height="10"><path d="M0 0L5 5.0L0 10Z" fill="#333"/></svg><svg style="left:21px;top:840px" width="15" height="13"><path d="M0 1.5A1.5 1.5 0 0 1 1.5 0H6L7.5 2H13.5A1.5 1.5 0 0 1 15 3.5V11.5A1.5 1.5 0 0 1 13.5 13H1.5A1.5 1.5 0 0 1 0 11.5Z" fill="#f08a24"/><rect x="2.5" y="5" width="4" height="5" fill="none" stroke="#fff" stroke-width="1"/><rect x="8.5" y="5" width="4" height="5" fill="none" stroke="#fff" stroke-width="1"/></svg>
<div class="t l g" style="left:39px;top:839px">Diagrams</div>
<svg style="left:8px;top:866px" width="5" height="10"><path d="M0 0L5 5.0L0 10Z" fill="#333"/></svg><svg style="left:21px;top:864px" width="15" height="13"><path d="M0 1.5A1.5 1.5 0 0 1 1.5 0H6L7.5 2H13.5A1.5 1.5 0 0 1 15 3.5V11.5A1.5 1.5 0 0 1 13.5 13H1.5A1.5 1.5 0 0 1 0 11.5Z" fill="#f08a24"/><path d="M4 5H10M5.5 5V11M8.5 5V11" stroke="#fff" stroke-width="1.2"/></svg>
<div class="t l g" style="left:39px;top:863px">Scripts</div>

<!-- ====== STATUS BAR ====== -->
<div class="t l g" style="left:3px;top:948px">ry</div>
<div class="a" style="left:561px;top:944px;width:1px;height:27px;background:#d8d3ce"></div>
<div class="t l g" style="left:568px;top:948px;letter-spacing:0">CST</div>
<div class="a" style="left:599px;top:944px;width:1px;height:27px;background:#d8d3ce"></div>
<div class="t l g" style="left:606px;top:948px;letter-spacing:0">zh_CN</div>
<div class="a" style="left:651px;top:952px;width:2px;height:15px;background:repeating-linear-gradient(#b5a998 0 2px,transparent 2px 4px)"></div>


<!-- ====== CONTEXT MENU ====== -->
<div class="a" style="left:103px;top:331px;width:270px;height:392px;background:#fff;border:1px solid #c3bcb4"></div>
<div class="a" style="left:104px;top:527px;width:268px;height:27px;background:#3174d8"></div>
<div class="a" style="left:104px;top:362px;width:268px;height:1px;background:#e3dfdb"></div>
<div class="a" style="left:104px;top:390px;width:268px;height:1px;background:#e3dfdb"></div>
<div class="a" style="left:104px;top:472px;width:268px;height:1px;background:#e3dfdb"></div>
<div class="a" style="left:104px;top:582px;width:268px;height:1px;background:#e3dfdb"></div>
<div class="a" style="left:104px;top:691px;width:268px;height:1px;background:#e3dfdb"></div>
<div class="t c" style="left:134px;top:342px;color:#2e3436">设为默认值</div>
<div class="t l" style="left:223px;top:342px;width:141px;text-align:right;color:#8a8a8a;font-size:13.5px;letter-spacing:0.6px">Shift+Ctrl+A</div>
<div class="t c" style="left:134px;top:369px;color:#2e3436"><span class="l">SQL</span> 编辑器</div>
<svg style="left:357px;top:372px" width="5" height="10"><path d="M0 0L5 5.0L0 10Z" fill="#333"/></svg>
<div class="t c" style="left:134px;top:397px;color:#2e3436">创建</div>
<svg style="left:357px;top:400px" width="5" height="10"><path d="M0 0L5 5.0L0 10Z" fill="#333"/></svg>
<div class="t c" style="left:156px;top:424px;color:#2e3436">查看 数据库</div>
<svg style="left:134px;top:424px" width="16" height="15"><path d="M11.5 0.8L14.5 3.8L5 13.3L1 14.2L1.8 10.3Z" fill="#5ab4e8" stroke="#1e7bd0" stroke-width="1.3" stroke-linejoin="round"/><path d="M1.8 10.3L5 13.3L1 14.2Z" fill="#fff" stroke="#1e7bd0" stroke-width="1"/><path d="M3.5 11.5L12.5 2.5" stroke="#1e7bd0" stroke-width="0.8"/></svg>
<div class="t l" style="left:223px;top:424px;width:141px;text-align:right;color:#8a8a8a;font-size:13.5px;letter-spacing:0.6px">F4</div>
<div class="t c" style="left:156px;top:452px;color:#2e3436">过滤器(F)</div>
<svg style="left:135px;top:452px" width="14" height="15"><path d="M1 1H13L8.5 6.5V14L5.5 11V6.5Z" fill="#5ab4e8" stroke="#1e7bd0" stroke-width="1.4" stroke-linejoin="round"/></svg>
<svg style="left:357px;top:454px" width="5" height="10"><path d="M0 0L5 5.0L0 10Z" fill="#333"/></svg>
<div class="t c" style="left:156px;top:479px;color:#2e3436">比较/迁移(P)</div>
<svg style="left:134px;top:479px" width="16" height="16"><path d="M1.5 6V4.5A2.5 2.5 0 0 1 4 2H7" stroke="#1e7bd0" stroke-width="1.4" fill="none"/><path d="M6 0L9 2L6 4Z" fill="#1e7bd0"/><path d="M1 8.5H5L6.5 10V15.5H1Z" fill="#5ab4e8" stroke="#1e7bd0" stroke-width="1"/><path d="M10 0.5H13.5L15 2V7.5H10Z" fill="#fff" stroke="#1e7bd0" stroke-width="1.1"/><path d="M14.5 9.5V11A2.5 2.5 0 0 1 12 13.5H9" stroke="#1e7bd0" stroke-width="1.4" fill="none"/><path d="M10 11.5L7 13.5L10 15.5Z" fill="#1e7bd0"/></svg>
<svg style="left:357px;top:482px" width="5" height="10"><path d="M0 0L5 5.0L0 10Z" fill="#333"/></svg>
<div class="t c" style="left:156px;top:506px;color:#2e3436">导入数据</div>
<svg style="left:134px;top:506px" width="16" height="14"><rect x="3.7" y="0.7" width="11.6" height="12.6" fill="#5ab4e8" stroke="#1e7bd0" stroke-width="1.3"/><rect x="3.7" y="0.7" width="11.6" height="2.5" fill="#1e7bd0"/><path d="M8 6.5H15M8 10H15" stroke="#1e7bd0" stroke-width="0.9"/><rect x="4.3" y="3.5" width="3.5" height="9.2" fill="#fff"/><path d="M0 8H6" stroke="#1e7bd0" stroke-width="1.3"/><path d="M4.5 5.8L6.8 8L4.5 10.2" stroke="#1e7bd0" stroke-width="1.2" fill="none"/></svg>
<div class="t c" style="left:156px;top:533px;color:#fff">工具</div>
<svg style="left:134px;top:533px" width="16" height="16"><path d="M3 14L10 7" stroke="#1a8ab0" stroke-width="2.5"/><path d="M8 3L13 8L15 6L10 1Z" fill="#1a9ac0"/></svg>
<svg style="left:357px;top:536px" width="5" height="10"><path d="M0 0L5 5.0L0 10Z" fill="#fff"/></svg>
<div class="t c" style="left:156px;top:561px;color:#2e3436">生成 <span class="l">SQL</span></div>
<svg style="left:134px;top:561px" width="16" height="16"><path d="M3 0.5H10L13 3.5V8" stroke="#1e7bd0" stroke-width="1.2" fill="none"/><path d="M3 0.5V7" stroke="#1e7bd0" stroke-width="1.2"/><text x="0" y="13.5" font-family="Liberation Sans" font-size="6.5" font-weight="bold" fill="#1e7bd0">SQL</text><path d="M0.5 15.5H15" stroke="#1e7bd0" stroke-width="1"/></svg>
<svg style="left:357px;top:564px" width="5" height="10"><path d="M0 0L5 5.0L0 10Z" fill="#333"/></svg>
<div class="t c" style="left:156px;top:589px;color:#2e3436">复制</div>
<svg style="left:135px;top:589px" width="14" height="16"><path d="M1 12V1H10" stroke="#1e7bd0" stroke-width="1.4" fill="none"/><rect x="3.7" y="3.7" width="9.6" height="11.6" rx="1" fill="#fff" stroke="#1e7bd0" stroke-width="1.4"/></svg>
<div class="t l" style="left:223px;top:589px;width:141px;text-align:right;color:#8a8a8a;font-size:13.5px;letter-spacing:0.6px">Ctrl+C</div>
<div class="t c" style="left:156px;top:616px;color:#2e3436">粘贴</div>
<svg style="left:135px;top:616px" width="13" height="16"><rect x="0.7" y="2.7" width="11.6" height="12.6" rx="1" fill="#fff" stroke="#1e7bd0" stroke-width="1.4"/><rect x="3.5" y="0.5" width="6" height="4" rx="1" fill="#1e7bd0"/></svg>
<div class="t l" style="left:223px;top:616px;width:141px;text-align:right;color:#8a8a8a;font-size:13.5px;letter-spacing:0.6px">Ctrl+V</div>
<div class="t c" style="left:156px;top:643px;color:#2e3436">删除</div>
<svg style="left:136px;top:643px" width="12" height="15"><rect x="0" y="1.5" width="12" height="2" fill="#e8432c"/><rect x="4" y="0" width="4" height="2" fill="#e8432c"/><path d="M1 4.5H11L10 15H2Z" fill="#e8432c"/></svg>
<div class="t c" style="left:156px;top:670px;color:#2e3436">重命名</div>
<svg style="left:135px;top:670px" width="14" height="14"><path d="M11 0.5L13.5 3L5 11.5H2.5V9Z" fill="#1e7bd0"/><path d="M8 13H13" stroke="#1e7bd0" stroke-width="1.3"/></svg>
<div class="t l" style="left:223px;top:670px;width:141px;text-align:right;color:#8a8a8a;font-size:13.5px;letter-spacing:0.6px">F2</div>
<div class="t c" style="left:156px;top:698px;color:#2e3436">刷新</div>
<svg style="left:134px;top:698px" width="16" height="16"><path d="M2.5 8A5.5 5.5 0 0 1 12.5 4.5" stroke="#1e7bd0" stroke-width="2" fill="none"/><path d="M13.5 8A5.5 5.5 0 0 1 3.5 11.5" stroke="#1e7bd0" stroke-width="2" fill="none"/><path d="M10 2.5L14.5 1.5L14 6.5Z" fill="#1e7bd0"/><path d="M6 13.5L1.5 14.5L2 9.5Z" fill="#1e7bd0"/></svg>
<div class="t l" style="left:223px;top:698px;width:141px;text-align:right;color:#8a8a8a;font-size:13.5px;letter-spacing:0.6px">F5</div>

<!-- ====== SUBMENU ====== -->
<div class="a" style="left:371px;top:523px;width:158px;height:172px;background:#fff;border:1px solid #c3bcb4"></div>
<div class="a" style="left:372px;top:635px;width:156px;height:1px;background:#e3dfdb"></div>
<div class="a" style="left:372px;top:663px;width:156px;height:1px;background:#e3dfdb"></div>
<svg style="left:403px;top:532px" width="14" height="16"><path d="M7 1V10M3.5 4.5L7 1L10.5 4.5" stroke="#1e7bd0" stroke-width="1.5" fill="none"/><path d="M1 9V15H13V9" stroke="#1e7bd0" stroke-width="1.5" fill="none"/></svg>
<div class="t c g" style="left:424px;top:532px">转储数据库</div>
<div class="a" style="left:372px;top:555px;width:156px;height:26px;background:#3174d8"></div>
<div class="a" style="left:370px;top:553px;width:159px;height:30px;border:3px solid #e2301f;border-radius:6px;box-shadow:0 1px 3px rgba(0,0,0,.35)"></div>
<svg style="left:403px;top:560px" width="14" height="16"><path d="M7 1V10M3.5 6.5L7 10L10.5 6.5" stroke="#1a8ab0" stroke-width="1.5" fill="none"/><path d="M1 9V15H13V9" stroke="#1a8ab0" stroke-width="1.5" fill="none"/></svg>
<div class="t c" style="left:424px;top:560px;color:#fff">恢复数据库</div>
<div class="t c g" style="left:402px;top:587px">执行脚本</div>
<svg style="left:402px;top:615px" width="17" height="14"><path d="M2 13A7 7 0 1 1 15 13Z" fill="none" stroke="#1e7bd0" stroke-width="1.6"/><path d="M8.5 10L12 6" stroke="#1e7bd0" stroke-width="1.8"/><path d="M4 6.5L5 7.5M8.5 4V5.5M13 6.5L12 7.5" stroke="#1e7bd0" stroke-width="1.2"/></svg>
<div class="t c g" style="left:424px;top:614px">打开仪表板</div>
<svg style="left:403px;top:642px" width="15" height="15"><rect x="5.5" y="0" width="4" height="4" fill="#1e7bd0"/><path d="M7.5 4V7M2 7H13M2 7V9M7.5 7V9M13 7V9" stroke="#2a9a3a" stroke-width="1.3" fill="none"/><rect x="0" y="11" width="3.5" height="3.5" fill="#2a9a3a"/><rect x="5.5" y="11" width="3.5" height="3.5" fill="#2a9a3a"/><rect x="11" y="11" width="3.5" height="3.5" fill="#2a9a3a"/></svg>
<div class="t c g" style="left:424px;top:642px">会话管理</div>
<svg style="left:403px;top:670px" width="15" height="16"><path d="M1 6L5.5 1H9.5L14 6V8M1 6V15H9" stroke="#1e7bd0" stroke-width="1.3" fill="none"/><rect x="5" y="6" width="5" height="3.5" fill="none" stroke="#1e7bd0" stroke-width="1.2"/><path d="M9.5 13H15M12.2 10.2V15.8" stroke="#2a9a3a" stroke-width="1.4"/></svg>
<div class="t c g" style="left:424px;top:670px">创建新任务...</div>

<!-- ============ RIGHT PANEL ============ -->
<div class="a" style="left:972px;top:79px;width:305px;height:896px;background:#252526"></div>


<!-- right panel sections -->
<div class="a" style="left:972px;top:79px;width:305px;height:90px;background:#333438"></div>
<svg style="left:996px;top:88px" width="8" height="13"><path d="M1 1L6.5 6.5L1 12" stroke="#c8c8c8" stroke-width="1.3" fill="none"/></svg>
<div class="t c" style="left:1016px;top:86px;color:#d0d0d0">设置</div>
<div class="t" style="left:1073px;top:85px;font-size:14px;line-height:18px;color:#bdbdbd">按 Shift 键切换输入法</div>
<div class="a" style="left:1233px;top:81px;width:24px;height:24px;border-radius:50%;background:#e8321e"></div>
<div class="t" style="left:1233px;top:85px;width:24px;text-align:center;font-size:13px;color:#fff">演</div>
<svg style="left:996px;top:118px" width="8" height="13"><path d="M1 1L6.5 6.5L1 12" stroke="#c8c8c8" stroke-width="1.3" fill="none"/></svg>
<div class="t c" style="left:1016px;top:116px;color:#d0d0d0">浏览器</div>
<svg style="left:1167px;top:117px" width="14" height="14"><path d="M5 1H13V9M13 1L6 8" stroke="#c8c8c8" stroke-width="1.1" fill="none"/><path d="M1 5V13H9" stroke="#c8c8c8" stroke-width="1.1" fill="none"/><rect x="1" y="9" width="4" height="4" fill="none" stroke="#c8c8c8" stroke-width="1.1"/></svg>
<div class="t" style="left:1187px;top:115px;font-size:13px;line-height:18px;color:#c8c8c8">新窗口打开</div>
<svg style="left:994px;top:150px" width="13" height="8"><path d="M1 1L6.5 6.5L12 1" stroke="#c8c8c8" stroke-width="1.3" fill="none"/></svg>
<div class="t c" style="left:1016px;top:146px;color:#d0d0d0">文件</div>
<!-- breadcrumb -->
<svg style="left:993px;top:187px" width="13" height="12"><path d="M6.5 0.5L13 6.5H11V12H8V8.5H5V12H2V6.5H0Z" fill="#c8c8c8"/></svg>
<div class="t" style="left:1015px;top:185px;font-size:14px;line-height:18px;color:#d0d0d0">/&nbsp;&nbsp;&nbsp;space.share&nbsp;&nbsp;&nbsp;/&nbsp;&nbsp;&nbsp;sql /</div>
<div class="a" style="left:993px;top:212px;width:264px;height:1px;background:#d0d0d0"></div>
<!-- buttons -->
<div class="a" style="left:993px;top:233px;width:118px;height:32px;border:1px solid #555;border-radius:2px"></div>
<div class="t" style="left:1009px;top:240px;font-size:14px;line-height:18px;color:#d0d0d0">返回上一级</div>
<svg style="left:1083px;top:243px" width="13" height="12"><path d="M6 0.5L0.5 6L6 11.5M1 6H12.5" stroke="#d0d0d0" stroke-width="2.4" fill="none"/></svg>
<div class="a" style="left:1115px;top:233px;width:104px;height:32px;border:1px solid #555;border-radius:2px"></div>
<div class="t" style="left:1130px;top:240px;font-size:14px;line-height:18px;color:#d0d0d0">上传文件</div>
<svg style="left:1190px;top:242px" width="14" height="14"><path d="M7 0.5L12 5.5H9V10H5V5.5H2Z" fill="#d0d0d0"/><path d="M0.5 10H4.5V11.5H9.5V10H13.5V13.5H0.5Z" fill="#d0d0d0"/></svg>
<!-- table -->
<div class="t" style="left:1011px;top:294px;font-size:14px;line-height:18px;color:#c8c8c8;font-weight:bold">文件名</div>
<div class="t" style="left:1183px;top:294px;font-size:14px;line-height:18px;color:#c8c8c8;font-weight:bold">文件大小</div>
<div class="a" style="left:1003px;top:321px;width:243px;height:1px;background:#4a4a4a"></div>
<svg style="left:1011px;top:333px" width="12" height="14"><path d="M0.7 0.7H7.5L11.3 4.5V13.3H0.7Z" fill="none" stroke="#c8c8c8" stroke-width="1.2"/><path d="M7.5 0.7V4.5H11.3" fill="none" stroke="#c8c8c8" stroke-width="1"/><path d="M3 6.5H9M3 8.8H9M3 11H9" stroke="#c8c8c8" stroke-width="1"/></svg><div class="t" style="left:1034px;top:331px;font-size:14px;line-height:18px;color:#d4d4d4">mysql</div><div class="t" style="left:1183px;top:331px;font-size:14px;line-height:18px;color:#d4d4d4">7.4 MB</div>
<div class="a" style="left:1003px;top:358px;width:243px;height:1px;background:#4a4a4a"></div>
<svg style="left:1011px;top:370px" width="12" height="14"><path d="M0.7 0.7H7.5L11.3 4.5V13.3H0.7Z" fill="none" stroke="#c8c8c8" stroke-width="1.2"/><path d="M7.5 0.7V4.5H11.3" fill="none" stroke="#c8c8c8" stroke-width="1"/><path d="M3 6.5H9M3 8.8H9M3 11H9" stroke="#c8c8c8" stroke-width="1"/></svg><div class="t" style="left:1034px;top:368px;font-size:14px;line-height:18px;color:#d4d4d4">.project</div><div class="t" style="left:1183px;top:368px;font-size:14px;line-height:18px;color:#d4d4d4">196 B</div>
<div class="a" style="left:1003px;top:395px;width:243px;height:1px;background:#4a4a4a"></div>
<svg style="left:1011px;top:407px" width="12" height="14"><path d="M0.7 0.7H7.5L11.3 4.5V13.3H0.7Z" fill="none" stroke="#c8c8c8" stroke-width="1.2"/><path d="M7.5 0.7V4.5H11.3" fill="none" stroke="#c8c8c8" stroke-width="1"/><path d="M3 6.5H9M3 8.8H9M3 11H9" stroke="#c8c8c8" stroke-width="1"/></svg><div class="t" style="left:1034px;top:405px;font-size:14px;line-height:18px;color:#d4d4d4">ry_20210924.sql</div><div class="t" style="left:1183px;top:405px;font-size:14px;line-height:18px;color:#d4d4d4">57 KB</div>
<div class="a" style="left:1003px;top:432px;width:243px;height:1px;background:#4a4a4a"></div>
<svg style="left:1011px;top:444px" width="12" height="14"><path d="M0.7 0.7H7.5L11.3 4.5V13.3H0.7Z" fill="none" stroke="#c8c8c8" stroke-width="1.2"/><path d="M7.5 0.7V4.5H11.3" fill="none" stroke="#c8c8c8" stroke-width="1"/><path d="M3 6.5H9M3 8.8H9M3 11H9" stroke="#c8c8c8" stroke-width="1"/></svg><div class="t" style="left:1034px;top:442px;font-size:14px;line-height:18px;color:#d4d4d4">ruoyi.pdm</div><div class="t" style="left:1183px;top:442px;font-size:14px;line-height:18px;color:#d4d4d4">153 KB</div>
<div class="a" style="left:1003px;top:469px;width:243px;height:1px;background:#4a4a4a"></div>
<svg style="left:1011px;top:481px" width="12" height="14"><path d="M0.7 0.7H7.5L11.3 4.5V13.3H0.7Z" fill="none" stroke="#c8c8c8" stroke-width="1.2"/><path d="M7.5 0.7V4.5H11.3" fill="none" stroke="#c8c8c8" stroke-width="1"/><path d="M3 6.5H9M3 8.8H9M3 11H9" stroke="#c8c8c8" stroke-width="1"/></svg><div class="t" style="left:1034px;top:479px;font-size:14px;line-height:18px;color:#d4d4d4">ruoyi.html</div><div class="t" style="left:1183px;top:479px;font-size:14px;line-height:18px;color:#d4d4d4">180 KB</div>
<div class="a" style="left:1003px;top:506px;width:243px;height:1px;background:#4a4a4a"></div>
<svg style="left:1011px;top:518px" width="12" height="14"><path d="M0.7 0.7H7.5L11.3 4.5V13.3H0.7Z" fill="none" stroke="#c8c8c8" stroke-width="1.2"/><path d="M7.5 0.7V4.5H11.3" fill="none" stroke="#c8c8c8" stroke-width="1"/><path d="M3 6.5H9M3 8.8H9M3 11H9" stroke="#c8c8c8" stroke-width="1"/></svg><div class="t" style="left:1034px;top:516px;font-size:14px;line-height:18px;color:#d4d4d4">quartz.sql</div><div class="t" style="left:1183px;top:516px;font-size:14px;line-height:18px;color:#d4d4d4">12 KB</div>

<div class="a" style="left:1001px;top:392px;width:248px;height:38px;border:3px solid #e6301c;border-radius:5px"></div>
<div class="a" style="left:1001px;top:503px;width:250px;height:38px;border:3px solid #e6301c;border-radius:5px"></div>
<!-- services -->
<div class="a" style="left:972px;top:821px;width:305px;height:30px;background:#333438"></div>
<svg style="left:994px;top:832px" width="13" height="8"><path d="M1 1L6.5 6.5L12 1" stroke="#c8c8c8" stroke-width="1.3" fill="none"/></svg>
<div class="t c" style="left:1016px;top:828px;color:#d0d0d0">服务</div>
<div class="a" style="left:972px;top:851px;width:305px;height:124px;overflow:hidden">
  <div class="t" style="left:21px;top:-8px;font-size:14px;letter-spacing:0.55px;line-height:18px;color:#c8c8c8">ide-test-fe</div>
  <div class="t" style="left:226px;top:-8px;font-size:14px;line-height:18px;color:#c8c8c8">-</div>
</div>
<div class="a" style="left:993px;top:867px;width:256px;height:1px;background:#4a4a4a"></div>
<div class="t" style="left:993px;top:875px;font-size:14px;letter-spacing:0.55px;line-height:18px;color:#c8c8c8">ide-test-java</div>
<div class="t" style="left:1198px;top:875px;font-size:14px;line-height:18px;color:#c8c8c8">-</div>
<div class="a" style="left:993px;top:900px;width:256px;height:1px;background:#4a4a4a"></div>
<div class="t" style="left:993px;top:908px;font-size:14px;letter-spacing:0.55px;line-height:18px;color:#c8c8c8">ide-typora-on-titanide</div>
<div class="t" style="left:1198px;top:908px;font-size:14px;line-height:18px;color:#c8c8c8">-</div>
<div class="a" style="left:993px;top:933px;width:256px;height:1px;background:#4a4a4a"></div>
<div class="t" style="left:993px;top:941px;font-size:14px;letter-spacing:0.55px;line-height:18px;color:#c8c8c8">mysql</div>
<div class="t" style="left:1198px;top:941px;font-size:14px;letter-spacing:0.55px;line-height:18px;color:#c8c8c8">3306</div>
<div class="a" style="left:1268px;top:941px;width:8px;height:34px;border-radius:4px;background:#4f4f4f"></div>

<div class="a" style="left:0;top:78px;width:972px;height:1px;background:#27282b"></div>
<div class="a" style="left:972px;top:78px;width:305px;height:1px;background:#5b5b5d"></div>
<div class="a" style="left:1276px;top:79px;width:1px;height:896px;background:#4a4a4c"></div>
<!-- watermarks -->
<div class="t" style="left:62px;top:153.8px;font-family:'Liberation Serif',serif;font-size:15.5px;letter-spacing:0.2px;color:rgba(140,140,140,0.25);transform-origin:0 13.2px;transform:rotate(-19.5deg)">demo@titanide.cn</div>
<div class="t" style="left:62px;top:353.8px;font-family:'Liberation Serif',serif;font-size:15.5px;letter-spacing:0.2px;color:rgba(140,140,140,0.25);transform-origin:0 13.2px;transform:rotate(-19.5deg)">demo@titanide.cn</div>
<div class="t" style="left:62px;top:553.8px;font-family:'Liberation Serif',serif;font-size:15.5px;letter-spacing:0.2px;color:rgba(140,140,140,0.25);transform-origin:0 13.2px;transform:rotate(-19.5deg)">demo@titanide.cn</div>
<div class="t" style="left:62px;top:753.8px;font-family:'Liberation Serif',serif;font-size:15.5px;letter-spacing:0.2px;color:rgba(140,140,140,0.25);transform-origin:0 13.2px;transform:rotate(-19.5deg)">demo@titanide.cn</div>
<div class="t" style="left:62px;top:953.8px;font-family:'Liberation Serif',serif;font-size:15.5px;letter-spacing:0.2px;color:rgba(140,140,140,0.25);transform-origin:0 13.2px;transform:rotate(-19.5deg)">demo@titanide.cn</div>
<div class="t" style="left:462px;top:153.8px;font-family:'Liberation Serif',serif;font-size:15.5px;letter-spacing:0.2px;color:rgba(140,140,140,0.25);transform-origin:0 13.2px;transform:rotate(-19.5deg)">demo@titanide.cn</div>
<div class="t" style="left:462px;top:353.8px;font-family:'Liberation Serif',serif;font-size:15.5px;letter-spacing:0.2px;color:rgba(140,140,140,0.25);transform-origin:0 13.2px;transform:rotate(-19.5deg)">demo@titanide.cn</div>
<div class="t" style="left:462px;top:553.8px;font-family:'Liberation Serif',serif;font-size:15.5px;letter-spacing:0.2px;color:rgba(140,140,140,0.25);transform-origin:0 13.2px;transform:rotate(-19.5deg)">demo@titanide.cn</div>
<div class="t" style="left:462px;top:753.8px;font-family:'Liberation Serif',serif;font-size:15.5px;letter-spacing:0.2px;color:rgba(140,140,140,0.25);transform-origin:0 13.2px;transform:rotate(-19.5deg)">demo@titanide.cn</div>
<div class="t" style="left:462px;top:953.8px;font-family:'Liberation Serif',serif;font-size:15.5px;letter-spacing:0.2px;color:rgba(140,140,140,0.25);transform-origin:0 13.2px;transform:rotate(-19.5deg)">demo@titanide.cn</div>
<div class="t" style="left:862px;top:153.8px;font-family:'Liberation Serif',serif;font-size:15.5px;letter-spacing:0.2px;color:rgba(140,140,140,0.25);transform-origin:0 13.2px;transform:rotate(-19.5deg)">demo@titanide.cn</div>
<div class="t" style="left:862px;top:353.8px;font-family:'Liberation Serif',serif;font-size:15.5px;letter-spacing:0.2px;color:rgba(140,140,140,0.25);transform-origin:0 13.2px;transform:rotate(-19.5deg)">demo@titanide.cn</div>
<div class="t" style="left:862px;top:553.8px;font-family:'Liberation Serif',serif;font-size:15.5px;letter-spacing:0.2px;color:rgba(140,140,140,0.25);transform-origin:0 13.2px;transform:rotate(-19.5deg)">demo@titanide.cn</div>
<div class="t" style="left:862px;top:753.8px;font-family:'Liberation Serif',serif;font-size:15.5px;letter-spacing:0.2px;color:rgba(140,140,140,0.25);transform-origin:0 13.2px;transform:rotate(-19.5deg)">demo@titanide.cn</div>
<div class="t" style="left:862px;top:953.8px;font-family:'Liberation Serif',serif;font-size:15.5px;letter-spacing:0.2px;color:rgba(140,140,140,0.25);transform-origin:0 13.2px;transform:rotate(-19.5deg)">demo@titanide.cn</div>
<div class="t" style="left:1262px;top:153.8px;font-family:'Liberation Serif',serif;font-size:15.5px;letter-spacing:0.2px;color:rgba(140,140,140,0.08);transform-origin:0 13.2px;transform:rotate(-19.5deg)">demo@titanide.cn</div>
<div class="t" style="left:1262px;top:353.8px;font-family:'Liberation Serif',serif;font-size:15.5px;letter-spacing:0.2px;color:rgba(140,140,140,0.08);transform-origin:0 13.2px;transform:rotate(-19.5deg)">demo@titanide.cn</div>
<div class="t" style="left:1262px;top:553.8px;font-family:'Liberation Serif',serif;font-size:15.5px;letter-spacing:0.2px;color:rgba(140,140,140,0.08);transform-origin:0 13.2px;transform:rotate(-19.5deg)">demo@titanide.cn</div>
<div class="t" style="left:1262px;top:753.8px;font-family:'Liberation Serif',serif;font-size:15.5px;letter-spacing:0.2px;color:rgba(140,140,140,0.08);transform-origin:0 13.2px;transform:rotate(-19.5deg)">demo@titanide.cn</div>
<div class="t" style="left:1262px;top:953.8px;font-family:'Liberation Serif',serif;font-size:15.5px;letter-spacing:0.2px;color:rgba(140,140,140,0.08);transform-origin:0 13.2px;transform:rotate(-19.5deg)">demo@titanide.cn</div>
<!-- window frame -->
<div class="a" style="left:0;top:0;width:1277px;height:975px;border-radius:10px;box-shadow:0 0 0 40px #000;pointer-events:none"></div>
<div class="a" style="left:0;top:0;width:1277px;height:78px;border-radius:10px 10px 0 0;border:1px solid #69696b;border-bottom:none;pointer-events:none"></div>
</body></html>
